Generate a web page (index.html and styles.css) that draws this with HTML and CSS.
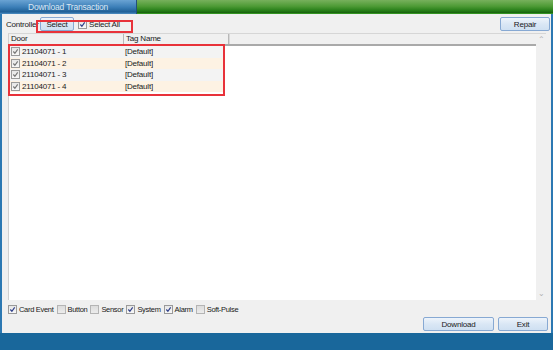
FILE: index.html
```html
<!DOCTYPE html>
<html lang="en">
<head>
    <meta charset="UTF-8">
    <title>Download Transaction</title>
    <link rel="stylesheet" href="styles.css">
</head>
<body>
    <div class="window">
        <div class="titlebar">
            <div class="tab">Download Transaction</div>
            <div class="strip"></div>
        </div>

        <div class="frame">
            <div class="toolbar">
                <span class="ctl-label">Controller</span>
                <button class="btn btn-select">Select</button>
                <span class="cb checked"><svg viewBox="0 0 8 8"><polyline points="1.5,4 3.3,6 6.5,1.5"/></svg></span>
                <span class="cb-text">Select All</span>
                <button class="btn btn-repair">Repair</button>
            </div>

            <div class="grid">
                <div class="grid-main">
                    <div class="grid-head">
                        <div class="col col-door">Door</div>
                        <div class="col col-tag">Tag Name</div>
                        <div class="col col-rest"></div>
                    </div>
                    <div class="grid-body">
                        <div class="row odd">
                            <div class="cell col-door"><span class="cb checked dim"><svg viewBox="0 0 8 8"><polyline points="1.5,4 3.3,6 6.5,1.5"/></svg></span>21104071 - 1</div>
                            <div class="cell col-tag">[Default]</div>
                        </div>
                        <div class="row even">
                            <div class="cell col-door"><span class="cb checked dim"><svg viewBox="0 0 8 8"><polyline points="1.5,4 3.3,6 6.5,1.5"/></svg></span>21104071 - 2</div>
                            <div class="cell col-tag">[Default]</div>
                        </div>
                        <div class="row odd">
                            <div class="cell col-door"><span class="cb checked dim"><svg viewBox="0 0 8 8"><polyline points="1.5,4 3.3,6 6.5,1.5"/></svg></span>21104071 - 3</div>
                            <div class="cell col-tag">[Default]</div>
                        </div>
                        <div class="row even">
                            <div class="cell col-door"><span class="cb checked dim"><svg viewBox="0 0 8 8"><polyline points="1.5,4 3.3,6 6.5,1.5"/></svg></span>21104071 - 4</div>
                            <div class="cell col-tag">[Default]</div>
                        </div>
                    </div>
                </div>
                <div class="scrollbar">
                    <span class="arrow">&#8963;</span>
                    <span class="arrow down">&#8964;</span>
                </div>
            </div>

            <div class="options">
                <span class="cb checked"><svg viewBox="0 0 8 8"><polyline points="1.5,4 3.3,6 6.5,1.5"/></svg></span><span class="opt">Card Event</span>
                <span class="cb"></span><span class="opt">Button</span>
                <span class="cb"></span><span class="opt">Sensor</span>
                <span class="cb checked"><svg viewBox="0 0 8 8"><polyline points="1.5,4 3.3,6 6.5,1.5"/></svg></span><span class="opt">System</span>
                <span class="cb checked"><svg viewBox="0 0 8 8"><polyline points="1.5,4 3.3,6 6.5,1.5"/></svg></span><span class="opt">Alarm</span>
                <span class="cb"></span><span class="opt">Soft-Pulse</span>
            </div>

            <div class="actions">
                <button class="btn btn-download">Download</button>
                <button class="btn btn-exit">Exit</button>
            </div>

            <div class="mark mark-top"></div>
            <div class="mark mark-rows"></div>
        </div>

        <div class="bottombar"></div>
    </div>
</body>
</html>
```

FILE: styles.css
```css
* {
    box-sizing: border-box;
}
body {
    margin: 0;
    background: #1a679a;
    font-family: 'Liberation Sans', Arial, sans-serif;
    font-size: 8px;
    letter-spacing: -0.2px;
    color: #1a1a1a;
}
.window {
    width: 553px;
    height: 350px;
    display: flex;
    flex-direction: column;
}
.titlebar {
    height: 14px;
    display: flex;
}
.tab {
    width: 137px;
    background: linear-gradient(#6aa3d3, #3c7fb8 50%, #1f5f96 85%, #4f8fc4);
    color: #dbe7f3;
    font-size: 8.5px;
    text-align: center;
    line-height: 14px;
    border-right: 1px solid #23507a;
}
.strip {
    flex: 1;
    background: linear-gradient(#77b05c, #4d9a35 45%, #217a14 80%, #1b6410 90%, #3fae2a);
}
.frame {
    flex: 1;
    position: relative;
    display: flex;
    flex-direction: column;
    background: #f0f0f0;
    border-left: 2px solid #2c78b2;
    border-right: 2px solid #2c78b2;
}
.toolbar {
    height: 14px;
    margin-top: 3px;
    padding-left: 4px;
    display: flex;
    align-items: center;
}
.ctl-label {
    width: 34px;
    overflow: hidden;
    white-space: nowrap;
}
.btn {
    height: 14px;
    padding: 0;
    font-family: inherit;
    font-size: 8px;
    letter-spacing: -0.2px;
    color: #1a1a1a;
    background: linear-gradient(#eef4fb, #dae7f5 50%, #cfe0f2);
    border: 1px solid #87a9d3;
    border-radius: 2px;
}
.btn-select {
    width: 34px;
}
.btn-repair {
    width: 50px;
    margin-left: auto;
    margin-right: 1px;
}
.cb {
    width: 9px;
    height: 9px;
    flex: none;
    display: inline-flex;
    border: 1px solid #b4b4b4;
    background: linear-gradient(#dcdcdc, #ececec);
    vertical-align: middle;
}
.cb.checked {
    border-color: #9a9a9a;
    background: linear-gradient(#e6e6e6, #f8f8f8);
}
.cb svg {
    width: 7px;
    height: 7px;
    fill: none;
    stroke: #2f3f8a;
    stroke-width: 1.3;
}
.cb.dim svg {
    stroke: #777;
}
.toolbar .cb {
    margin-left: 4px;
}
.cb-text {
    margin-left: 2px;
}
.grid {
    height: 267px;
    margin: 2px 5px 0 6px;
    display: flex;
    background: #fff;
    border-top: 1px solid #d6d6d6;
    border-left: 1px solid #d0d0d0;
}
.grid-main {
    flex: 1;
}
.grid-head {
    height: 12px;
    display: flex;
    background: #f0f0f0;
    border-bottom: 2px solid #a9a9a9;
}
.col {
    line-height: 10px;
    padding-left: 2px;
    border-right: 1px solid #b8b8b8;
}
.col-door {
    width: 115px;
}
.col-tag {
    width: 105px;
}
.col-rest {
    flex: 1;
    border-left: 1px solid #d8d8d8;
    border-right: none;
}
.row {
    width: 216px;
    height: 11.6px;
    display: flex;
    align-items: center;
}
.row.odd {
    background: #f3f3f3;
}
.row.even {
    background: #fdf2e3;
}
.cell {
    display: flex;
    align-items: center;
}
.cell.col-door {
    padding-left: 2px;
}
.cell.col-door .cb {
    margin-right: 2px;
}
.cell.col-tag {
    width: 100px;
    padding-left: 1px;
}
.scrollbar {
    width: 10px;
    background: #f0f0f0;
    display: flex;
    flex-direction: column;
    justify-content: space-between;
    align-items: center;
    color: #b0b0b0;
    font-size: 8px;
    padding: 2px 0 2px;
}
.arrow {
    line-height: 8px;
}
.options {
    height: 12px;
    margin-top: 3px;
    padding-left: 6px;
    display: flex;
    align-items: center;
}
.opt {
    font-size: 7.5px;
    letter-spacing: -0.3px;
    margin: 0 3px 0 2px;
}
.actions {
    height: 14px;
    margin-top: 2px;
    display: flex;
    justify-content: flex-end;
    padding-right: 3px;
    gap: 4px;
}
.btn-download {
    width: 71px;
}
.btn-exit {
    width: 50px;
}
.mark {
    position: absolute;
    border: 2px solid #e8323a;
}
.mark-top {
    left: 34px;
    top: 6px;
    width: 97px;
    height: 13px;
}
.mark-rows {
    left: 6px;
    top: 30px;
    width: 217px;
    height: 52px;
}
.bottombar {
    height: 17px;
    background: #19679b;
}
```
